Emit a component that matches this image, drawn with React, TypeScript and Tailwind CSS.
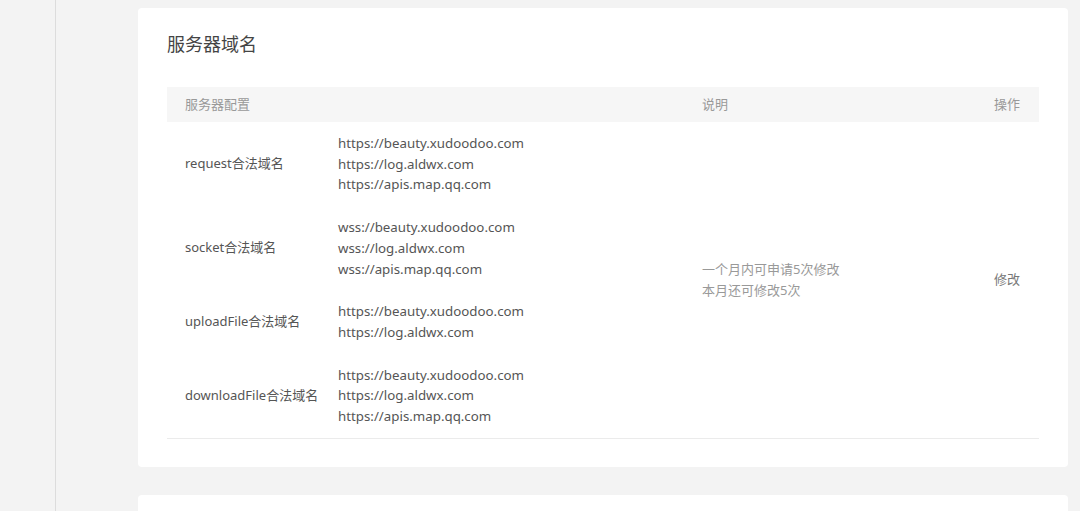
import React from "react";

const rows = [
  {
    label: "request合法域名",
    urls: ["https://beauty.xudoodoo.com", "https://log.aldwx.com", "https://apis.map.qq.com"],
  },
  {
    label: "socket合法域名",
    urls: ["wss://beauty.xudoodoo.com", "wss://log.aldwx.com", "wss://apis.map.qq.com"],
  },
  {
    label: "uploadFile合法域名",
    urls: ["https://beauty.xudoodoo.com", "https://log.aldwx.com"],
  },
  {
    label: "downloadFile合法域名",
    urls: ["https://beauty.xudoodoo.com", "https://log.aldwx.com", "https://apis.map.qq.com"],
  },
];

export default function App() {
  return (
    <div
      className="flex h-[511px] w-[1080px] overflow-hidden bg-[#f3f3f3] text-[13px]"
      style={{ fontFamily: '"Noto Sans", "Noto Sans CJK SC", sans-serif' }}
    >
      <div className="w-[56px] shrink-0 border-r border-[#dcdcdc]" />
      <div className="flex flex-1 flex-col gap-[28px] pl-[82px] pr-[12px] pt-[8px]">
        <div className="h-[459px] shrink-0 rounded-[4px] bg-white px-[29px] pt-[24px]">
          <h2 className="text-[18px] leading-[24px] text-[#444]">服务器域名</h2>
          <div className="mt-[31px]">
            <div className="flex h-[35px] items-center bg-[#f6f6f6] text-[13px] text-[#999]">
              <div className="w-[535px] pl-[18px]">服务器配置</div>
              <div className="flex-1">说明</div>
              <div className="pr-[19px]">操作</div>
            </div>
            <div className="flex border-b border-[#ebebeb]">
              <div className="w-[535px]">
                {rows.map((r) => (
                  <div key={r.label} className="flex py-[11px]">
                    <div className="flex w-[171px] items-center pl-[18px] text-[#555]">{r.label}</div>
                    <div className="flex flex-col text-[13.3px] text-[#555]">
                      {r.urls.map((u) => (
                        <div key={u} className="leading-[20.7px]">
                          {u}
                        </div>
                      ))}
                    </div>
                  </div>
                ))}
              </div>
              <div className="flex flex-1 flex-col justify-center text-[#999]">
                <div className="leading-[21px]">一个月内可申请5次修改</div>
                <div className="leading-[21px]">本月还可修改5次</div>
              </div>
              <div className="flex items-center pr-[19px] text-[#777]">修改</div>
            </div>
          </div>
        </div>
        <div className="h-[100px] shrink-0 rounded-[4px] bg-white" />
      </div>
    </div>
  );
}
